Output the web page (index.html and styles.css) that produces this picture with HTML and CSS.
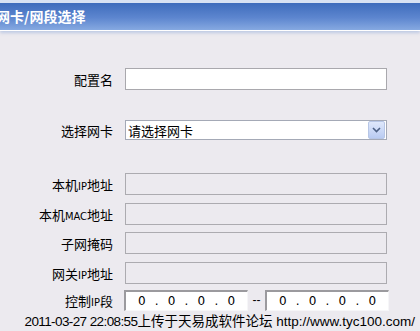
FILE: index.html
```html
<!DOCTYPE html>
<html lang="zh-CN">
<head>
    <meta charset="UTF-8">
    <title>网卡/网段选择</title>
    <link rel="stylesheet" href="styles.css">
</head>
<body>

    <div class="titlebar">网卡/网段选择</div>

    <form class="form">
        <div class="row">
            <label class="label" for="cfgName">配置名</label>
            <input class="field" type="text" id="cfgName">
        </div>

        <div class="row row-select">
            <label class="label">选择网卡</label>
            <div class="select">
                <span class="select-text">请选择网卡</span>
                <span class="select-btn">
                    <svg width="9" height="6" viewBox="0 0 9 6"><path d="M1 1 L4.5 4.5 L8 1" fill="none" stroke="#4d6185" stroke-width="1.6"/></svg>
                </span>
            </div>
        </div>

        <div class="row row-info">
            <label class="label">本机<span class="lat">IP</span>地址</label>
            <input class="field" type="text" disabled>
        </div>
        <div class="row">
            <label class="label">本机<span class="lat">MAC</span>地址</label>
            <input class="field" type="text" disabled>
        </div>
        <div class="row row-tight">
            <label class="label">子网掩码</label>
            <input class="field" type="text" disabled>
        </div>
        <div class="row">
            <label class="label">网关<span class="lat">IP</span>地址</label>
            <input class="field" type="text" disabled>
        </div>

        <div class="row row-ip">
            <label class="label">控制<span class="lat">IP</span>段</label>
            <div class="ip-range">
                <div class="ip">
                    <span class="oct">0</span><span class="dot">.</span><span class="oct">0</span><span class="dot">.</span><span class="oct">0</span><span class="dot">.</span><span class="oct">0</span>
                </div>
                <span class="dash">--</span>
                <div class="ip">
                    <span class="oct">0</span><span class="dot">.</span><span class="oct">0</span><span class="dot">.</span><span class="oct">0</span><span class="dot">.</span><span class="oct">0</span>
                </div>
            </div>
        </div>
    </form>

    <div class="footer"><span class="date">2011-03-27 22:08:55</span>上传于天易成软件论坛 http://www.tyc100.com/</div>

</body>
</html>
```

FILE: styles.css
```css
body {
    margin: 0;
    width: 420px;
    height: 331px;
    overflow: hidden;
    background-color: #eceaef;
    font-family: "Liberation Sans", "Noto Sans CJK SC", sans-serif;
    color: #000;
}

.titlebar {
    height: 27px;
    line-height: 27px;
    border-top: 3px solid #d8e2f3;
    border-bottom: 1px solid #ffffff;
    background: linear-gradient(to bottom, #3e6cbc, #5d86cf 55%, #86a9e1);
    box-shadow: 0 2px 3px rgba(170, 188, 222, 0.7);
    color: #fff;
    font-family: "Noto Sans CJK SC", sans-serif;
    font-size: 14px;
    font-weight: bold;
    text-indent: -4px;
    white-space: nowrap;
    overflow: hidden;
}

.form {
    display: flex;
    flex-direction: column;
    padding-top: 37px;
    margin: 0;
}

.row {
    display: flex;
    align-items: center;
    height: 22px;
}

.row + .row {
    margin-top: 8px;
}

.row.row-select {
    margin-top: 30px;
    height: 20px;
}

.row.row-info {
    margin-top: 33px;
}

.row.row-tight {
    margin-top: 7px;
}

.row.row-ip {
    margin-top: 6px;
    height: 21px;
}

.label {
    width: 113px;
    margin-right: 12px;
    text-align: right;
    font-family: "Noto Sans CJK SC", sans-serif;
    font-size: 13px;
    white-space: nowrap;
}

.lat {
    font-family: "DejaVu Sans Condensed", "Liberation Sans", sans-serif;
    font-size: 11px;
}

.field {
    box-sizing: border-box;
    width: 262px;
    height: 22px;
    margin: 0;
    padding: 0 3px;
    border: 1px solid #a9a8ad;
    background: #fff;
    font-size: 12px;
}

.field:disabled {
    background: #eceaef;
    border-color: #acabb0;
}

.select {
    box-sizing: border-box;
    display: flex;
    align-items: center;
    justify-content: space-between;
    width: 262px;
    height: 20px;
    border: 1px solid #a4a9b6;
    background: #fff;
}

.select-text {
    padding-left: 2px;
    font-family: "Noto Sans CJK SC", sans-serif;
    font-size: 13px;
}

.select-btn {
    display: flex;
    align-items: center;
    justify-content: center;
    width: 15px;
    height: 16px;
    margin-right: 1px;
    border: 1px solid #b7c6e6;
    border-radius: 2px;
    background: linear-gradient(to bottom, #dfe8fb, #b9cbf2);
}

.ip-range {
    display: flex;
    align-items: center;
    margin-left: -1px;
}

.ip {
    box-sizing: border-box;
    display: flex;
    align-items: center;
    justify-content: center;
    width: 124px;
    height: 21px;
    border-top: 2px solid #9b9a9e;
    border-left: 2px solid #9b9a9e;
    border-bottom: 1px solid #f6f6f8;
    border-right: 1px solid #f6f6f8;
    background: #fff;
    font-family: "DejaVu Sans", sans-serif;
    font-size: 12px;
}

.oct {
    width: 20px;
    text-align: center;
}

.dot {
    text-align: center;
    padding: 0 3px;
}

.dash {
    width: 17px;
    text-align: center;
    font-size: 12px;
    padding-bottom: 2px;
}

.footer {
    margin-top: 2px;
    padding-right: 5px;
    text-align: right;
    white-space: nowrap;
    font-size: 13.5px;
    line-height: 18px;
}

.date {
    letter-spacing: -0.6px;
}
```
